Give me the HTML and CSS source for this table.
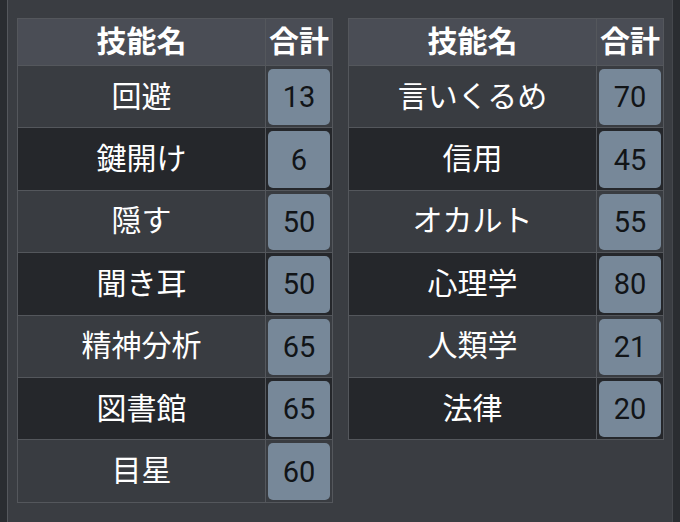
FILE: index.html
```html
<!DOCTYPE html>
<html lang="ja">
<head>
<meta charset="utf-8">
<link rel="stylesheet" href="styles.css">
</head>
<body>
<div class="panel">
  <table class="skills">
    <thead>
      <tr><th class="name">技能名</th><th class="total">合計</th></tr>
    </thead>
    <tbody>
      <tr class="odd"><td class="name">回避</td><td class="num"><div class="badge">13</div></td></tr>
      <tr class="even"><td class="name">鍵開け</td><td class="num"><div class="badge">6</div></td></tr>
      <tr class="odd"><td class="name">隠す</td><td class="num"><div class="badge">50</div></td></tr>
      <tr class="even"><td class="name">聞き耳</td><td class="num"><div class="badge">50</div></td></tr>
      <tr class="odd"><td class="name">精神分析</td><td class="num"><div class="badge">65</div></td></tr>
      <tr class="even"><td class="name">図書館</td><td class="num"><div class="badge">65</div></td></tr>
      <tr class="odd"><td class="name">目星</td><td class="num"><div class="badge">60</div></td></tr>
    </tbody>
  </table>
  <table class="skills">
    <thead>
      <tr><th class="name">技能名</th><th class="total">合計</th></tr>
    </thead>
    <tbody>
      <tr class="odd"><td class="name">言いくるめ</td><td class="num"><div class="badge">70</div></td></tr>
      <tr class="even"><td class="name">信用</td><td class="num"><div class="badge">45</div></td></tr>
      <tr class="odd"><td class="name">オカルト</td><td class="num"><div class="badge">55</div></td></tr>
      <tr class="even"><td class="name">心理学</td><td class="num"><div class="badge">80</div></td></tr>
      <tr class="odd"><td class="name">人類学</td><td class="num"><div class="badge">21</div></td></tr>
      <tr class="even"><td class="name">法律</td><td class="num"><div class="badge">20</div></td></tr>
    </tbody>
  </table>
</div>
</body>
</html>
```
FILE: styles.css
```css
html, body {
  margin: 0;
  padding: 0;
  background: #2a2d31;
  height: 100%;
}
body {
  font-family: Roboto, "Noto Sans CJK JP", sans-serif;
  color: #ffffff;
}
.panel {
  margin-left: 7px;
  width: 666px;
  height: 522px;
  box-sizing: border-box;
  border-left: 1px solid #55585d;
  border-right: 1px solid #45484d;
  background: #3a3d42;
  padding: 18px 0 0 9px;
  display: flex;
  align-items: flex-start;
  gap: 15px;
}
.skills {
  border-collapse: collapse;
  width: 315px;
  border: 1px solid #54575c;
  table-layout: fixed;
}
.skills th, .skills td {
  border: 1px solid #54575c;
  padding: 0;
  text-align: center;
}
.skills th {
  background: #4a4d55;
  height: 46px;
  font-size: 30px;
  font-weight: bold;
  line-height: 1;
  white-space: nowrap;
}
.skills th.name { width: 247px; }
.skills th.total { width: 66px; }
.skills td.name {
  font-size: 30px;
  line-height: 1;
}
.odd td { background: #393c41; }
.even td { background: #25272b; }
.skills td.num {
  padding: 3px 2px 2px 2px;
}
.badge {
  background: #778899;
  border-radius: 5px;
  height: 56.4px;
  display: flex;
  align-items: center;
  justify-content: center;
  color: #111417;
  font-size: 29px;
}
```
